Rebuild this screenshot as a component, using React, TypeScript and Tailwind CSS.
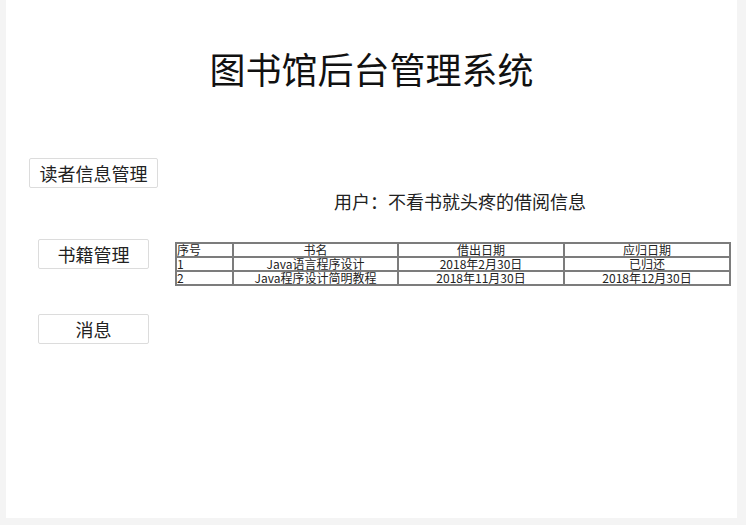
import React from "react";

const font = { fontFamily: '"Noto Sans CJK SC", "Noto Sans", sans-serif' };

function NavButton({ label, className }: { label: string; className: string }) {
  return (
    <div
      className={`h-[30px] flex items-center justify-center border border-[#dcdcdc] rounded-[2px] bg-white text-[18px] leading-none text-[#222] ${className}`}
    >
      {label}
    </div>
  );
}

const rows = [
  ["1", "Java语言程序设计", "2018年2月30日", "已归还"],
  ["2", "Java程序设计简明教程", "2018年11月30日", "2018年12月30日"],
];

export default function App() {
  return (
    <div className="w-[746px] h-[525px] bg-[#f4f4f4] pl-[6px] pr-[9px] pb-[7px]" style={font}>
      <div className="h-full bg-white flex flex-col">
        <div className="pt-[46px] text-center text-[36px] leading-[44px] text-[#111]">图书馆后台管理系统</div>
        <div className="flex mt-[68px]">
          <div className="w-[169px] flex flex-col">
            <NavButton label="读者信息管理" className="ml-[23px] w-[129px]" />
            <NavButton label="书籍管理" className="ml-[32px] w-[111px] mt-[51px]" />
            <NavButton label="消息" className="ml-[32px] w-[111px] mt-[45px]" />
          </div>
          <div className="flex-1 flex flex-col">
            <div className="mt-[31px] pl-[8px] text-center text-[18px] leading-[24px] text-[#222]">
              用户：不看书就头疼的借阅信息
            </div>
            <table
              className="mt-[29px] w-[556px] border-2 border-[#7c7c7c] text-[12px] leading-[12px] text-[#222]"
              style={{ borderCollapse: "collapse" }}
            >
              <thead>
                <tr>
                  <th className="w-[57px] border-2 border-[#7c7c7c] font-normal text-left h-[12px] p-0">序号</th>
                  <th className="w-[165px] border-2 border-[#7c7c7c] font-normal text-center h-[12px] p-0">书名</th>
                  <th className="w-[166px] border-2 border-[#7c7c7c] font-normal text-center h-[12px] p-0">借出日期</th>
                  <th className="border-2 border-[#7c7c7c] font-normal text-center h-[12px] p-0">应归日期</th>
                </tr>
              </thead>
              <tbody>
                {rows.map((r) => (
                  <tr key={r[0]}>
                    {r.map((c, i) => (
                      <td
                        key={i}
                        className={`border-2 border-[#7c7c7c] h-[12px] p-0 ${i === 0 ? "text-left" : "text-center"}`}
                      >
                        {c}
                      </td>
                    ))}
                  </tr>
                ))}
              </tbody>
            </table>
          </div>
        </div>
      </div>
    </div>
  );
}
